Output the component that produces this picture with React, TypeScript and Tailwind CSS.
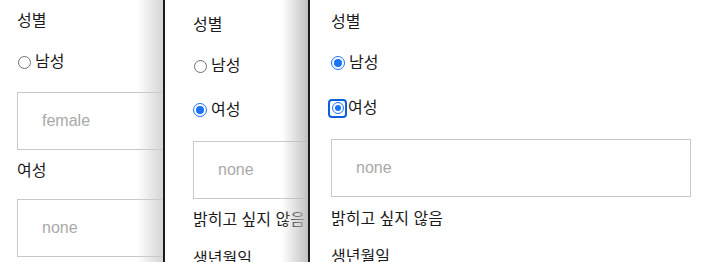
import React from "react";

const font = { fontFamily: '"Liberation Sans", "Noto Sans CJK KR", sans-serif' };

function Circle({ checked, size = 13 }: { checked?: boolean; size?: number }) {
  if (!checked) {
    return <span className="block h-[13px] w-[13px] rounded-full border border-[#707070] bg-white" />;
  }
  return (
    <span
      className="flex items-center justify-center rounded-full border-[1.5px] border-[#1a73f5] bg-white"
      style={{ width: size, height: size }}
    >
      <span className="block rounded-full bg-[#1a73f5]" style={{ width: size - 6, height: size - 6 }} />
    </span>
  );
}

function RadioRow({ checked, focus, label, className = "" }: { checked?: boolean; focus?: boolean; label: string; className?: string }) {
  return (
    <div className={`flex h-[20px] items-center text-[16px] leading-[20px] text-[#1a1a1a] ${className}`}>
      {focus ? (
        <span className="-ml-[3px] mr-[1px] flex h-[19px] w-[19px] shrink-0 items-center justify-center rounded-[4px] border-[2.5px] border-[#0b5fd8] bg-white">
          <Circle checked size={12} />
        </span>
      ) : (
        <span className="mr-[4px] flex h-[14px] w-[14px] shrink-0 items-center justify-center">
          <Circle checked={checked} size={14} />
        </span>
      )}
      <span>{label}</span>
    </div>
  );
}

function Label({ children, className = "" }: { children: React.ReactNode; className?: string }) {
  return <div className={`h-[20px] whitespace-nowrap text-[16px] leading-[20px] text-[#1a1a1a] ${className}`}>{children}</div>;
}

function Box({ text, className = "" }: { text: string; className?: string }) {
  return (
    <div className={`flex h-[58px] shrink-0 items-center border border-[#c8c8c8] bg-white pl-[24px] text-[16px] text-[#a9a9a9] ${className}`}>
      {text}
    </div>
  );
}

function Shade({ dark }: { dark?: boolean }) {
  return (
    <div className="pointer-events-none absolute right-0 top-0 flex h-full">
      <div
        className={`h-full w-[26px] bg-gradient-to-r ${
          dark ? "from-[rgba(190,190,190,0)] to-[rgba(190,190,190,0.95)]" : "from-[rgba(205,205,205,0)] to-[rgba(205,205,205,0.85)]"
        }`}
      />
      <div className="h-full w-[2px] bg-[#1c1c1c]" />
    </div>
  );
}

export default function App() {
  return (
    <div className="flex h-[262px] w-[711px] overflow-hidden bg-white" style={font}>
      <div className="relative h-full w-[165px] shrink-0 overflow-hidden">
        <div className="flex w-[300px] flex-col pl-[17px] pt-[11px]">
          <Label>성별</Label>
          <RadioRow label="남성" className="mt-[21px]" />
          <Box text="female" className="mt-[20px] w-[260px]" />
          <Label className="mt-[11px]">여성</Label>
          <Box text="none" className="mt-[18px] w-[260px]" />
        </div>
        <Shade />
      </div>
      <div className="relative h-full w-[145px] shrink-0 overflow-hidden">
        <div className="flex w-[300px] flex-col pl-[28px] pt-[15px]">
          <Label>성별</Label>
          <RadioRow label="남성" className="mt-[21px]" />
          <RadioRow checked label="여성" className="mt-[24px]" />
          <Box text="none" className="mt-[21px] w-[260px]" />
          <Label className="mt-[11px]">밝히고 싶지 않음</Label>
          <Label className="mt-[19px]">생년월일</Label>
        </div>
        <Shade dark />
      </div>
      <div className="relative h-full flex-1 overflow-hidden">
        <div className="flex flex-col pl-[21px] pr-[20px] pt-[12px]">
          <Label>성별</Label>
          <RadioRow checked label="남성" className="mt-[21px]" />
          <RadioRow checked focus label="여성" className="mt-[25px]" />
          <Box text="none" className="mt-[21px]" />
          <Label className="mt-[12px]">밝히고 싶지 않음</Label>
          <Label className="mt-[18px]">생년월일</Label>
        </div>
      </div>
    </div>
  );
}
